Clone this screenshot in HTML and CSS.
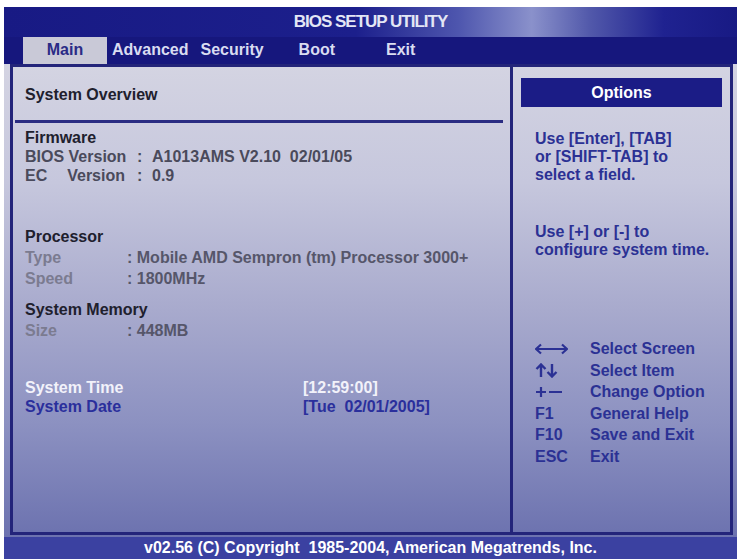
FILE: index.html
```html
<!DOCTYPE html>
<html lang="en">
<head>
    <meta charset="UTF-8">
    <meta name="viewport" content="width=device-width, initial-scale=1.0">
    <title>BIOS Setup Utility</title>
    <link rel="stylesheet" href="styles.css">
</head>
<body>
    <div id="screen">
        <div id="titlebar">BIOS SETUP UTILITY</div>
        <div id="tabs">
            <span class="tab active">Main</span>
            <span class="tab adv">Advanced</span>
            <span class="tab sec">Security</span>
            <span class="tab boot">Boot</span>
            <span class="tab exit">Exit</span>
        </div>
        <div id="main">
            <div id="frame">
                <div id="left">
                    <div class="heading overview">System Overview</div>
                    <div class="rule"></div>
                    <div class="group firmware">
                        <div class="heading">Firmware</div>
                        <div class="row ver">
                            <span class="vlabel">BIOS Version</span>
                            <span class="colon">:</span>
                            <span class="vval">A1013AMS V2.10  02/01/05</span>
                        </div>
                        <div class="row ver">
                            <span class="vlabel"><span>EC</span><span>Version</span></span>
                            <span class="colon">:</span>
                            <span class="vval">0.9</span>
                        </div>
                    </div>
                    <div class="group processor">
                        <div class="heading">Processor</div>
                        <div class="row"><span class="label">Type</span><span class="val">: Mobile AMD Sempron (tm) Processor 3000+</span></div>
                        <div class="row"><span class="label">Speed</span><span class="val">: 1800MHz</span></div>
                    </div>
                    <div class="group memory">
                        <div class="heading">System Memory</div>
                        <div class="row"><span class="label">Size</span><span class="val">: 448MB</span></div>
                    </div>
                    <div class="group datetime">
                        <div class="row selected"><span class="dlabel">System Time</span><span>[12:59:00]</span></div>
                        <div class="row field"><span class="dlabel">System Date</span><span>[Tue  02/01/2005]</span></div>
                    </div>
                </div>
                <div id="right">
                    <div id="options">Options</div>
                    <div class="help first">Use [Enter], [TAB]<br>or [SHIFT-TAB] to<br>select a field.</div>
                    <div class="help second">Use [+] or [-] to<br>configure system time.</div>
                    <div class="keys">
                        <div class="key">
                            <span class="k">
                                <svg width="33" height="12" viewBox="0 0 33 12"><path d="M1 6H32M6 1.5L1 6L6 10.5M27 1.5L32 6L27 10.5" fill="none" stroke="#2b3194" stroke-width="2.2"/></svg>
                            </span>
                            <span>Select Screen</span>
                        </div>
                        <div class="key">
                            <span class="k">
                                <svg width="24" height="15" viewBox="0 0 24 15"><path d="M6 14V1.5M1.5 6L6 1.5L10.5 6M17 1V13.5M12.5 9L17 13.5L21.5 9" fill="none" stroke="#2b3194" stroke-width="2.4"/></svg>
                            </span>
                            <span>Select Item</span>
                        </div>
                        <div class="key">
                            <span class="k">
                                <svg width="28" height="12" viewBox="0 0 28 12"><path d="M1 6H11M6 1V11M14 6H27" fill="none" stroke="#2b3194" stroke-width="2.2"/></svg>
                            </span>
                            <span>Change Option</span>
                        </div>
                        <div class="key"><span class="k">F1</span><span>General Help</span></div>
                        <div class="key"><span class="k">F10</span><span>Save and Exit</span></div>
                        <div class="key"><span class="k">ESC</span><span>Exit</span></div>
                    </div>
                </div>
            </div>
        </div>
        <div id="footer">v02.56 (C) Copyright  1985-2004, American Megatrends, Inc.</div>
    </div>
</body>
</html>
```

FILE: styles.css
```css
body {margin: 0; background: #fff; font-family: "Liberation Sans", Arial, sans-serif; font-weight: bold; font-size: 16px;}

#screen {margin: 7px 0 0 4px; width: 733px; height: 552px; display: flex; flex-direction: column;}

#titlebar {
    height: 30px; line-height: 30px; text-align: center;
    color: #e3e6f5; font-size: 17px; letter-spacing: -1px;
    background: linear-gradient(90deg, #181a84 0%, #1c1f8c 48%, #4e56ae 62%, #8a91cb 72%, #5158aa 80%, #1f2290 90%, #181a84 100%);
}

#tabs {height: 27px; display: flex; padding-left: 19px; background: #16177d; color: #d9dcf1;}
.tab {height: 27px; line-height: 25px;}
.tab.active {width: 84px; text-align: center; background: #c9c9d7; color: #2a2b86;}
.adv {margin-left: 5px;}
.sec {margin-left: 12px;}
.boot {margin-left: 35px;}
.exit {margin-left: 51px;}

#main {
    height: 473px; box-sizing: border-box; padding: 0 4px 2px 6px;
    background: linear-gradient(180deg, #d4d4e2 0%, #c6c7dd 25%, #a8aacd 52%, #8c91c1 76%, #6c72af 100%);
}
#frame {height: 471px; box-sizing: border-box; border: 3px solid #23247a; display: flex;}

#left {width: 497px; border-right: 3px solid #23247a;}
.heading {color: #20202d;}
.overview {margin: 17.5px 0 0 12px; line-height: 20px;}
.rule {height: 3px; margin: 15px 7px 0 2px; background: #2a2c82;}
.group {padding-left: 12px;}
.row {display: flex; white-space: pre;}
.firmware {margin-top: 5px; line-height: 19px;}
.processor {margin-top: 41px; line-height: 21px;}
.memory {margin-top: 10px; line-height: 21px;}
.datetime {margin-top: 37.5px; line-height: 19px;}

.ver {color: #4a4a5b;}
.vlabel {width: 100px; display: flex; justify-content: space-between;}
.colon {margin-left: 12px; width: 15px;}
.label {width: 102px; color: #7b7b90;}
.val {color: #56566a;}
.dlabel {width: 278px;}
.selected {color: #f2f2fa;}
.field {color: #2a2f9c;}

#right {flex: 1; padding: 0 8px; color: #2b3194;}
#options {margin-top: 11px; height: 29px; line-height: 29px; text-align: center; background: #1b1c86; color: #fff;}
.help {padding-left: 14px; line-height: 18px;}
.first {margin-top: 22.5px;}
.second {margin-top: 39px;}
.keys {margin-top: 80px; padding-left: 14px;}
.key {display: flex; align-items: center; height: 21.5px;}
.k {width: 55px; display: flex; align-items: center;}

#footer {height: 22px; line-height: 22px; text-align: center; white-space: pre; background: #3b41a1; color: #fff;}
```
